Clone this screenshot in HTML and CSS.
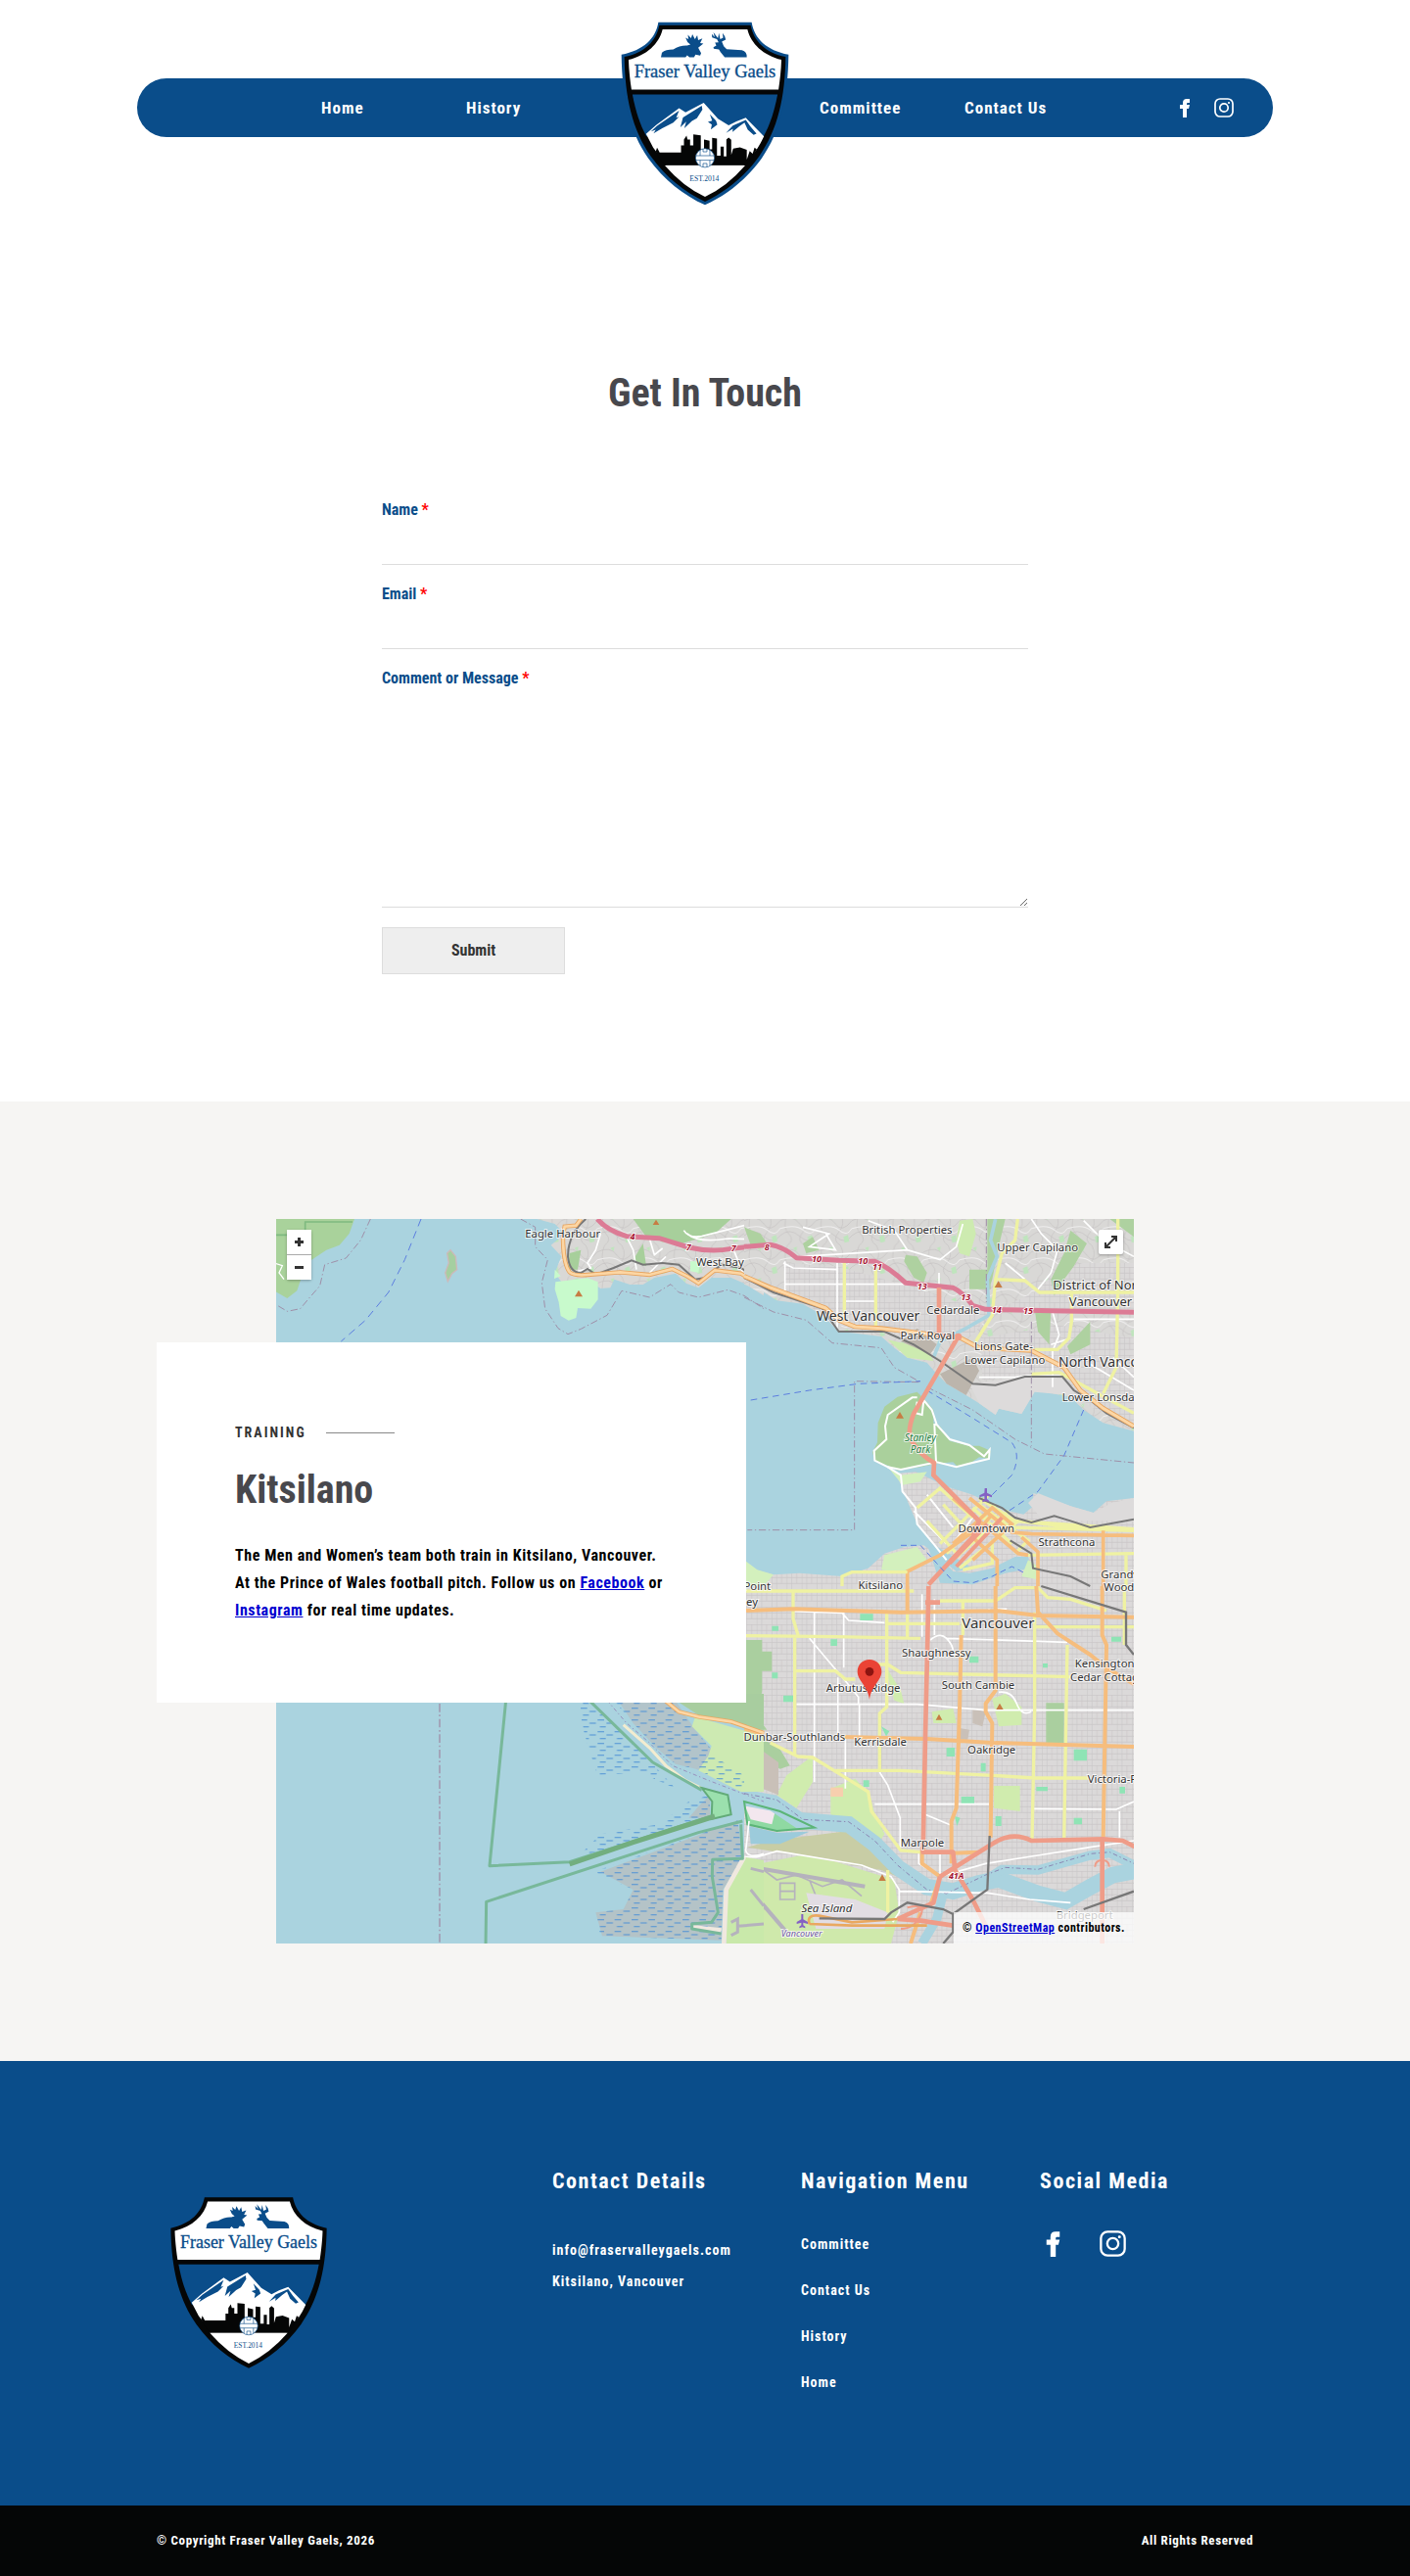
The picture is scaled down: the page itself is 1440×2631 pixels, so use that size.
FILE: index.html
```html
<!DOCTYPE html>
<html lang="en">
<head>
<meta charset="utf-8">
<meta name="viewport" content="width=device-width, initial-scale=1">
<title>Contact Us - Fraser Valley Gaels</title>
<link rel="stylesheet" href="styles.css">
</head>
<body>
<svg class="sprite" aria-hidden="true">
  <symbol id="crest" viewBox="100 68 520 564">
    <path fill="#050606" d="M219 77H501C510 125 545 162 609 175C607 300 585 400 527 482C480 548 422 592 360 622C298 592 240 548 193 482C135 400 113 300 111 175C175 162 210 125 219 77Z"/>
    <path fill="#fff" d="M229 90H491C502 135 540 170 596 184C595 217 591 249 587 276H133C129 249 125 217 124 184C180 170 218 135 229 90Z"/>
    <path fill="#0a4d8a" d="M136 291H584C574 345 560 385 541 420H179C160 385 146 345 136 291Z"/>
    <path fill="#fff" d="M178 413L210 385L280 333L300 346L356 317L400 366L433 386L457 374L486 363L542 420Q532 442 520 460L480 508H240L200 455Z"/>
    <g fill="#0a4d8a">
      <path d="M280 341L212 388L193 405L208 400L201 411L228 395L262 378L280 360L271 363ZM350 326L292 362L284 392L302 375L296 395L320 373L335 364L352 338ZM375 352L382 372L369 376L381 384L378 399L398 384L394 372ZM486 370L446 387L425 410L446 397L445 407L466 389L482 378L492 400L510 416L519 412L501 391Z"/>
      <path d="M224 176L227 162Q238 152 262 152Q282 139 305 140L315 137L306 129L300 116L309 120L307 107L317 117L321 105L329 120L336 108L339 123L352 118L345 132L355 134L339 147L348 163L345 171L331 168L326 176H312L305 170L300 176Z"/>
      <path d="M391 131L402 130L397 120L382 115L381 104L390 114L386 99L400 117L403 101L407 120L416 116L414 101L421 111L424 122L412 128L418 142L427 151L474 154Q490 158 489 176H421L408 160L403 152L387 150L386 145L395 140Z"/>
    </g>
    <path fill="#050606" d="M212 455L220 470H286V448H295V430L303 418L306 430H314V448H324V414L347 417V460L357 461V430L374 434V460H382V425L397 427V480H408V452H418V482H426V430L433 424L441 431V478L447 458L468 454L489 462V492L498 466L507 474L513 455L520 460Q500 492 484 509H236Q218 488 208 467Z"/>
    <path fill="#fff" d="M236 510H484Q428 575 360 607Q292 575 236 510Z"/>
    <circle cx="360" cy="487" r="29" fill="#fff" stroke="#0a4d8a" stroke-width="2"/>
    <path fill="none" stroke="#0a4d8a" stroke-width="2" d="M333 480H387M333 494H387M345 462V480M375 462V480M345 494V511M375 494V511M354 459V468H366V459M354 515V504H366V515"/>
    <text x="360" y="238" text-anchor="middle" font-family="'Liberation Serif', serif" font-weight="400" font-size="56" fill="#0a4d8a" stroke="#0a4d8a" stroke-width="1">Fraser Valley Gaels</text>
    <text x="358" y="558" text-anchor="middle" font-family="'Liberation Serif', serif" font-weight="400" font-size="23" fill="#0a4d8a">EST.2014</text>
  </symbol>
  <symbol id="facebook" viewBox="0 0 20 20">
    <path fill="#fff" d="M8 20V11H5V7H8V5Q8 1 12 1H15V5H13Q12 5 12 6V7H15L14 11H12V20Z"/>
  </symbol>
  <symbol id="instagram" viewBox="0 0 20 20">
    <rect x="1" y="1" width="18" height="18" rx="5" fill="none" stroke="#fff" stroke-width="1.7"/>
    <circle cx="10" cy="10" r="4.2" fill="none" stroke="#fff" stroke-width="1.7"/>
    <circle cx="15" cy="5" r="1.1" fill="#fff"/>
  </symbol>
</svg>

<header class="site-header">
  <nav class="bar" aria-label="Main">
    <ul class="links links-left">
      <li><a href="#home">Home</a></li>
      <li><a href="#history">History</a></li>
    </ul>
    <a class="brand" href="#home" aria-label="Fraser Valley Gaels">
      <svg class="brand-crest" viewBox="100 68 520 564">
        <path fill="#0a4d8a" d="M216 68H504C512 118 550 155 618 168C616 305 592 408 535 488C486 555 426 602 360 632C294 602 234 555 185 488C128 408 104 305 102 168C170 155 208 118 216 68Z"/>
        <use href="#crest" x="100" y="68" width="520" height="564"/>
      </svg>
    </a>
    <ul class="links links-right">
      <li><a href="#committee">Committee</a></li>
      <li><a href="#contact">Contact Us</a></li>
    </ul>
    <div class="social">
      <a href="#facebook-page" aria-label="Facebook"><svg><use href="#facebook"/></svg></a>
      <a href="#instagram-page" aria-label="Instagram"><svg><use href="#instagram"/></svg></a>
    </div>
  </nav>
</header>

<main>
  <section class="contact" id="contact">
    <h1 class="title">Get In Touch</h1>
    <form class="form">
      <div class="field">
        <label for="name">Name <span class="required">*</span></label>
        <input id="name" type="text" required>
      </div>
      <div class="field">
        <label for="email">Email <span class="required">*</span></label>
        <input id="email" type="email" required>
      </div>
      <div class="field">
        <label for="message">Comment or Message <span class="required">*</span></label>
        <textarea id="message" required></textarea>
      </div>
      <button class="submit" type="submit">Submit</button>
    </form>
  </section>

  <section class="training">
    <div class="training-grid">
      <div class="map">
        <svg class="map-art" viewBox="0 0 2628 2220" preserveAspectRatio="xMaxYMid slice" role="img" aria-label="Map of Vancouver">
          <defs>
            <pattern id="streets" width="46" height="54" patternUnits="userSpaceOnUse">
              <rect width="46" height="54" fill="#dbd9d9"/>
              <path fill="none" stroke="#c9c6c7" stroke-width="2" d="M0 1H46M0 19H46M0 37H46M1 0V54M16 0V54M31 0V37"/>
            </pattern>
            <pattern id="hills" width="110" height="96" patternUnits="userSpaceOnUse">
              <rect width="110" height="96" fill="#d9d8d6"/>
              <path fill="none" stroke="#c5c1c2" stroke-width="2" d="M0 20Q40 0 60 30T110 20M0 66Q30 40 60 68T110 66M22 0Q6 40 26 60T22 96M75 0Q92 30 70 55T75 96"/>
              <path fill="none" stroke="#efeeee" stroke-width="3" d="M0 44Q50 30 72 50T110 44"/>
              <path fill="#bfe5bd" d="M84 70L98 64L102 84L88 88ZM40 8L52 4L50 18Z"/>
            </pattern>
            <pattern id="marsh" width="52" height="36" patternUnits="userSpaceOnUse">
              <path stroke="#4e92d6" stroke-width="3" d="M3 8H23M30 18H50M10 29H28"/>
            </pattern>
          </defs>
          <rect width="2628" height="2220" fill="#aad3df"/>

          <!-- Bowen Island corner and the north shore -->
          <g transform="translate(-6 -15)">
            <path fill="#a9d29b" d="M0 15H246L230 60L200 95L160 110L100 150L80 205L70 235L40 258L0 235Z"/>
            <path fill="none" stroke="#7fba80" stroke-width="5" d="M0 64H95V24H240"/>
            <path fill="none" stroke="#fff" stroke-width="4" d="M0 150L25 158L15 180L30 200"/>
            <path fill="#a5cfa0" stroke="#cdb9b9" stroke-width="4" d="M540 110L556 130L560 170L545 182L532 206L524 180L535 150L530 120Z"/>
            <path fill="url(#hills)" d="M805 15L860 30L890 60L848 95L880 130L860 180L880 208L960 200L1000 228L1030 226L1042 200L1090 216L1130 216L1165 195L1230 182L1262 212L1300 226L1340 195L1400 195L1440 212L1500 250V15Z"/>
            <path fill="#a7cf9b" d="M1100 15H1400L1350 60L1250 90L1140 70ZM905 120L940 110L930 170L900 170ZM1130 90L1140 160L1100 140Z"/>
            <path fill="#c8facc" d="M862 208L960 196L992 208V262L970 290L930 288L925 318L902 326L878 312L872 270L860 230ZM860 170L878 190L858 198ZM1275 145H1305L1300 180L1275 175Z"/>
            <g fill="none" stroke="#fff" stroke-width="5">
              <path d="M1000 60L985 110L960 150L970 165L930 175M1080 70L1100 110L1110 170M1150 75L1165 125L1190 105M1200 130L1180 150L1150 180M1255 50Q1270 75 1310 68L1500 20M1265 60Q1300 90 1390 75L1500 78M1410 115L1440 190"/>
            </g>
            <path fill="none" stroke="#777" stroke-width="6" d="M955 15Q900 60 900 130Q905 180 940 180L960 168L985 185L1040 165L1095 142L1130 155L1190 150L1240 155L1290 200L1320 195L1370 155L1430 165L1500 210"/>
            <path fill="none" stroke="#e8a35c" stroke-width="13" d="M940 15L925 35L890 38L885 70Q885 150 905 178Q920 190 960 186L1060 178L1150 186L1220 168L1265 190L1300 212L1350 172L1430 182L1500 225"/>
            <path fill="none" stroke="#fcd6a4" stroke-width="8" d="M940 15L925 35L890 38L885 70Q885 150 905 178Q920 190 960 186L1060 178L1150 186L1220 168L1265 190L1300 212L1350 172L1430 182L1500 225"/>
            <path fill="none" stroke="#dc7b95" stroke-width="15" d="M990 15Q1020 50 1080 68L1180 74L1270 102Q1340 118 1400 106L1500 95"/>
            <path fill="none" stroke="#9f8fa8" stroke-width="3" stroke-dasharray="22 8 4 8" d="M295 15L265 80L220 135L155 155L140 220L105 260L80 290L40 298L10 280M755 15L800 40L800 100L838 140L820 210L830 290L870 350L900 368L940 352L1020 310L1065 235L1150 255L1215 215L1240 240L1300 255L1390 232L1440 250L1500 290"/>
            <path fill="none" stroke="#5c7ee0" stroke-width="3" stroke-dasharray="24 16" d="M450 15L400 140L350 240L280 325L205 390"/>
          </g>

          <g transform="translate(1434 -15)">
            <path fill="url(#hills)" d="M0 15H1194V665L1100 640L1040 600L1000 560L890 540L850 612L780 596L770 615L720 580L680 555L620 520L590 490L560 455L500 440L460 410L420 375L340 365L290 360L240 310L180 275L100 265L60 240L0 215Z"/>
            <path fill="url(#streets)" d="M120 150L285 160L500 220L720 290L950 290H1194V150H1040L960 170L890 240L760 300L700 370L600 390L460 370L290 340L130 240ZM725 380L960 340L1194 380V640L1060 590L960 500L880 490L730 510Z"/>
            <path fill="#dddbdb" d="M690 520L880 495L980 505L1040 590L1000 555L890 545L850 612L780 596L770 615L720 580Z"/>
            <path fill="#aed1a0" d="M745 15H800L775 120L760 200L740 260L745 180ZM690 170H755V230H690ZM495 125L530 130L560 180L550 210L520 195L490 145ZM1000 50L1050 90L1010 160L980 200L950 250L940 200L980 120ZM0 40L50 60L70 90L20 95ZM1060 330L1060 400L1000 430L990 405ZM890 290H940L935 400L900 360ZM1120 15H1194V70ZM180 90L210 70L230 110L190 120Z"/>
            <path fill="#cdebb0" d="M660 20L700 15L710 60L690 130L660 120L650 80ZM485 395L560 410L580 450L500 440L440 385Z"/>
            <path fill="#bcb5ac" d="M600 490L700 440L720 480L680 555L620 520ZM530 350L590 400L570 430L480 390Z"/>
            <path fill="none" stroke="#aad3df" stroke-width="11" d="M770 15L755 80L775 130L745 200L750 310L680 350L600 390L580 440"/>
            <g fill="none" stroke="#fff" stroke-width="5">
              <path d="M125 145V240M125 215H500M285 150V350M310 267H400M170 130L500 110L600 140L650 100L670 30M180 40L260 60L200 100L280 110L250 60M500 110L460 50L380 20M120 150L150 165L285 170M597 180V225M880 15L910 60L960 110L940 180L900 230M800 150L860 200M1040 20L1100 80L1194 130M720 500H830L870 495H1000M945 300L965 370L945 420V530M1010 322H1194M1000 380L940 400M1060 460L1194 540M1130 440L1194 500"/>
            </g>
            <g fill="none" stroke="#eff2a2" stroke-width="10">
              <path d="M307 145V335M403 165V345M838 15L830 80L790 120L770 200L760 310L710 390M770 200L860 204L905 240H1194M1003 240V330L995 380L960 415H890M880 490L965 485L1194 610M1145 15V240L1140 470L1100 550"/>
            </g>
            <path fill="none" stroke="#777" stroke-width="6" d="M0 195L90 240L150 260L240 290L290 360H430L520 400L600 450L700 520L770 524L860 498H975L1010 540L1060 570L1110 610L1194 655"/>
            <g fill="none" stroke-linejoin="round">
              <path stroke="#e8a35c" stroke-width="14" d="M0 190L80 225L250 288L290 325L340 345L420 350L600 372L660 378L720 410L880 418L980 470L1030 540L1100 595L1194 650"/>
              <path stroke="#fcd6a4" stroke-width="9" d="M0 190L80 225L250 288L290 325L340 345L420 350L600 372L660 378L720 410L880 418L980 470L1030 540L1100 595L1194 650"/>
              <path stroke="#dc7b95" stroke-width="15" d="M0 100L80 94Q120 100 160 134L290 142L400 145Q440 160 495 211L640 226Q670 240 700 280L740 292L940 296L1194 301"/>
              <path stroke="#ef9c88" stroke-width="14" d="M597 225V372L655 376"/>
            </g>
            <g fill="none" stroke="#9f8fa8" stroke-width="3" stroke-dasharray="22 8 4 8">
              <path d="M0 255L90 300L190 325L270 395L420 410L460 470L540 515L338 512V968H10M560 530L700 600L830 690L920 735L1194 762M880 330V710M742 15V270"/>
            </g>
            <path fill="none" stroke="#5c7ee0" stroke-width="3" stroke-dasharray="20 14" d="M20 570L200 540L350 520L540 512M560 540L700 625L820 700Q850 740 820 800L760 860M1040 600L980 740L900 850L810 910"/>

            <!-- Stanley Park -->
            <path fill="#aad09c" d="M530 545L470 560L430 590L410 640L408 700L393 730L400 755L440 770L470 785L540 775L585 765L640 760L655 775L690 765L720 745L750 750L755 725L720 710L690 710L630 695L600 650L580 640V600L555 570Z"/>
            <path fill="none" stroke="#fff" stroke-width="6" d="M530 562L515 562L440 615L432 650L436 690L398 725L400 755L440 775L480 783L540 770L590 760L650 775L690 764L750 750L752 722L735 742L690 708L630 690L590 645L583 645L588 760M590 645L575 600L550 570L545 615L525 610L530 575"/>
          </g>

          <!-- city south of Burrard Inlet -->
          <path fill="url(#streets)" d="M1434 1048L1474 1076L1524 1090L1604 1085L1734 1095L1814 1070L1864 1025L1924 1005L1985 1000L2040 1045L2084 1080L2134 1070L2010 995L1962 930L1924 840L1900 780L1960 775L2054 820L2134 845L2224 890L2290 905L2320 880V840L2434 880L2504 900L2544 865L2628 855V2220H1434Z"/>
          <path fill="#dddbdb" d="M2304 870L2334 840L2434 880L2504 900L2560 870L2628 855V925H2350Z"/>

          <g transform="translate(1434 -15)">
            <path fill="#aad3df" d="M560 1010L600 1050L640 1095L690 1100L760 1085L830 1050L870 1050L880 1085L800 1100L700 1135L600 1130Z"/>
            <path fill="#d3f0bd" d="M440 775L480 800L560 790L540 820L485 830ZM430 1045L530 1020L560 1060L500 1100L420 1090ZM0 1060L40 1090L90 1105L60 1140H0ZM870 1060L900 1080V1120L850 1110Z"/>
            <path fill="none" stroke="#fff" stroke-width="6" d="M440 775L480 800L485 850L525 900L530 950L580 1010L620 1060M560 860L640 960M610 830L700 930L640 1010M520 910L620 1010"/>
            <g fill="none" stroke="#eff2a2" stroke-width="10">
              <path d="M530 900L600 840L700 930M600 1010L750 860M620 1040L770 890M640 1060L810 910M660 1085L840 940M560 940L660 1050M610 890L720 1010M700 900L820 1010M720 890L870 1000L830 1040M740 930L1060 965M820 960L1194 970M870 1045L1194 1040M720 870L830 940L1194 965M670 1090L760 1070L760 1000M1170 1040V1140"/>
            </g>
            <g fill="none" stroke="#f6bd7d" stroke-width="11">
              <path d="M690 870L820 975L880 980L1194 985M500 1140V1095L600 1045L720 960M640 870L720 940L840 1040L870 1045M775 1140V1060L700 990L760 920M900 1140V1035L850 990M1100 970V1140M640 1010L760 900L820 950L700 1060"/>
            </g>
            <path fill="none" stroke="#eff2a2" stroke-width="10" d="M300 1140V1110L330 1097H500"/>
            <path fill="none" stroke="#ef9c88" stroke-width="14" stroke-linejoin="round" d="M655 376L590 490L520 610Q500 660 510 690Q540 740 582 762L580 800L720 940L700 990L565 1135"/>
            <path fill="none" stroke="#ef9c88" stroke-width="12" d="M630 1070L745 950M650 1080L790 930"/>
            <circle cx="656" cy="376" r="11" fill="#ef9c88"/>
            <path fill="none" stroke="#777" stroke-width="6" d="M720 870L790 900L830 930L880 945L950 925L1000 940L1060 960L1194 935M815 1000L880 1040L885 1085L1000 1110L1060 1140"/>
            <path fill="none" stroke="#5c7ee0" stroke-width="3" stroke-dasharray="18 12" d="M480 1015L540 1015L590 1070L640 1125L700 1130L760 1110L820 1080L860 1100"/>
            <path fill="#8461c4" d="M737 840h7v14l15 8v6l-15-5v10l6 5v5l-10-3-10 3v-5l6-5v-10l-15 5v-6l15-8z"/>
          </g>

          <g transform="translate(1434 1125)">
            <!-- parks, golf courses and the river -->
            <path fill="#aacf9f" d="M0 165H55V200H85V260H55V320L40 400L70 440H0ZM0 440L60 470L110 500L140 550L110 560L60 530H0ZM925 358H980V482H925Z"/>
            <path fill="#d0ecae" d="M130 580L210 520V600L160 680L100 640ZM265 620L340 590L385 640L400 700L430 760L410 790L350 740L265 700ZM765 612H845V690L765 680ZM575 385L640 375L650 420H580ZM760 345L800 330L850 370V425L780 430ZM430 240L480 320L490 360L460 350Z"/>
            <path fill="#8fe4b5" d="M355 85H395V105H355ZM265 163H285V183H265ZM690 215H718V235H690ZM85 265H103V283H85ZM120 335H150V355H120ZM620 495H645V522H620ZM725 542H740V568H725ZM770 705H788V735H770ZM665 645H705V668H665ZM1010 500H1050V535H1010ZM1010 710H1035V730H1010ZM365 595H383V615H365ZM420 430L445 445L435 460ZM1125 155H1155V170H1125ZM915 237H930V250H915ZM895 615H930V628H895ZM645 705L662 710L652 735ZM85 122H105V137H85ZM1150 615H1167V635H1150Z"/>
            <path fill="#c9c0b8" d="M700 375L740 385L730 430L700 420ZM660 435L690 440L685 470H660ZM0 520L50 500L105 540V640L30 610Z"/>
            <path fill="#f7cfae" d="M265 617H303V645H265Z"/>
            <path fill="#cfe9ab" d="M0 860L200 820L460 900L475 1000L450 1095H0Z"/>
            <path fill="#c8cda5" d="M10 800L80 780L320 750L400 790L470 890L420 870L200 830Z"/>
            <path fill="#8fd9a2" d="M0 655L110 690L210 735V745L100 750L10 730Z"/>
            <path fill="#f3e7ee" d="M0 668L95 690L85 730L20 715Z"/>
            <path fill="#9ccbdb" d="M15 735L100 755L200 752L110 790L20 790Z"/>
            <path fill="none" stroke="#aad3df" stroke-width="50" d="M-60 620L0 648L90 665L170 718L320 730L400 790L470 862L560 922L640 935L720 910L780 898L900 942L985 965L1060 922L1130 885L1200 872"/>
            <path fill="none" stroke="#aad3df" stroke-width="28" d="M730 905L790 868L900 870L1060 825L1120 818L1200 858M610 940L590 1020L545 1095"/>
            <path fill="none" stroke="#8a86b3" stroke-width="3" stroke-dasharray="14 8 4 8" d="M0 635L100 655L180 715L320 722L400 780L470 855L560 930L620 942L740 885L800 862L900 868L1060 820L1120 815L1194 850"/>
            <path fill="none" stroke="#5bb577" stroke-width="6" d="M0 660L110 690L215 740L100 750L10 730Z"/>
            <path fill="none" stroke="#b5b2bd" stroke-width="12" d="M20 860L370 920M20 932L130 1060"/>
            <path fill="none" stroke="#b5b2bd" stroke-width="5" d="M60 870L100 900L160 885L240 920L300 900L360 950M200 900L240 1000M60 990L0 1050M110 910H155V960H110ZM110 935H155"/>
            <path fill="#e2dde3" d="M190 940L340 960L440 1000L430 1050H220Z"/>

            <g fill="none" stroke="#fff" stroke-width="5">
              <path d="M150 77L300 82L320 105L430 112M215 80V600M305 80V250M160 362H530L740 380H1194M287 280V460M353 362V460M200 160L250 220L310 290L350 340V360M570 165Q600 140 620 160Q640 180 640 200M620 160L990 172M545 25V155M583 40V150M310 460V620M415 570L440 610L478 710V800M400 668H750M885 682L1140 684L1194 660M1150 690V770M555 700L640 735M535 820V850L600 890L740 850L880 828L1060 800L1194 780M600 820L600 890M475 935L745 940L875 960L1000 970M0 830L40 830L100 812L360 855L450 890L475 930V1000L455 1030M780 325Q820 320 835 360T880 385M480 810L540 815M775 70H805M750 70V80"/>
            </g>
            <g fill="none" stroke="#eff2a2" stroke-width="10">
              <path d="M150 15V100L165 150M0 152L280 155L540 160M155 155V520M0 15H520M437 80V370L415 390V560M160 260H280L310 285H340M400 240H440L480 265L1000 278M670 40V150M435 115H660M500 85V160M600 45H770L830 5H900L930 35L1000 40L1110 75M895 125H1194M990 180L980 780M890 80V380L882 780M280 565L480 565L760 580L890 588H1060M80 480L165 522L210 525L300 580L380 630L390 690L480 810L540 815M1165 0V180M440 870V1000"/>
            </g>
            <g fill="none" stroke="#f6bd7d" stroke-width="12" stroke-linejoin="round">
              <path d="M0 75L150 70L480 80L780 76L900 90L1194 95M500 0V80M770 0V320L740 360V385L760 420L755 770M895 0L900 80L960 145L1060 210L1110 250L1194 300M1097 0V150L1110 180L1100 770M665 150L660 380L650 680L635 720V850M0 440L60 455M300 462L560 468L760 480L1194 492M635 818L720 815M545 800V850L600 890L570 980M540 1000L510 1095"/>
            </g>
            <g fill="none" stroke="#ef9c88" stroke-width="14" stroke-linejoin="round">
              <path d="M565 0L562 160L555 460L548 815H640L645 860M555 50H600M1097 770V1095M600 890L580 970L470 1020M600 890L760 790Q820 750 880 780L1100 775L1160 780L1200 800M640 860L700 960L740 1040M470 1020L540 1025L640 1040"/>
            </g>
            <path fill="none" stroke="#ef9c88" stroke-width="6" d="M500 985Q560 970 540 1010T480 1050M1075 860Q1075 840 1097 840T1118 860"/>
            <path fill="none" stroke="#e9a860" stroke-width="8" d="M200 1035Q190 1005 230 1010L330 1030L470 1020M200 1035L330 1040H560"/>
            <path fill="none" stroke="#777" stroke-width="7" d="M752 765L745 930L640 1005L610 990L500 970L450 1000L430 1020L230 1018M640 1005V1060L610 1095M910 0L1170 80V180L1194 210M1194 935L1040 990"/>
            <g fill="#c77c43">
              <path d="M597 392l10 18h-20zM783 359l11 19h-22zM423 883l11 20h-22z"/>
            </g>
            <path fill="#8461c4" d="M175 1005h6v16l14 8v6l-14-4v8l6 4v5l-9-3-9 3v-5l6-4v-8l-14 4v-6l14-8z"/>
          </g>

          <!-- tidal flats and Iona jetty -->
          <g transform="translate(-6 1455)">
            <path fill="#b2c4ca" d="M1040 0H1215L1290 110L1340 170L1310 235L1230 215L1170 165L1100 90Z"/>
            <path fill="#b4c3c7" d="M1420 388L1000 545L1100 600L1070 660L985 670L1005 742L1370 755L1375 600L1435 505ZM1335 310V380L1270 380L1300 345Z"/>
            <path fill="url(#marsh)" d="M1040 20H1215L1290 110L1340 170L1310 235L1230 215L1170 165L1100 90ZM930 20L975 30L1160 215L1230 290L1120 240L990 250L950 120ZM1420 388L980 545L1100 600L1070 660L985 670L1000 742L1370 755L1375 600L1435 505ZM1335 310V380L930 500L1000 430L1180 400L1270 330Z"/>
            <path fill="#a8cd9f" d="M1200 0H1500V110L1420 95L1300 65Z"/>
            <path fill="#cdeab2" d="M1290 70L1500 130V300L1430 300L1300 235L1330 190L1340 160L1280 100Z"/>
            <path fill="url(#marsh)" d="M1330 180L1440 250V300L1300 235Z"/>
            <path fill="#c9e9aa" d="M1440 500L1500 510V765H1385L1390 600Z"/>
            <path fill="none" stroke="#f0e8df" stroke-width="14" d="M1440 500L1385 600L1378 765M1280 715L1370 725"/>
            <path fill="none" stroke="#b5b2bd" stroke-width="9" d="M1460 535L1500 545M1460 600L1500 650M1400 700L1420 690V730L1400 740M1420 712L1500 705"/>
            <path fill="none" stroke="#e9a860" stroke-width="13" d="M1195 18L1240 55L1300 70L1400 85L1500 120"/>
            <path fill="none" stroke="#fcd6a4" stroke-width="8" d="M1195 18L1240 55L1300 70L1400 85L1500 120"/>
            <path fill="none" stroke="#f2ecd0" stroke-width="9" d="M1070 95L1150 165L1200 220L1260 265L1310 290"/>
            <path fill="#9be0ad" stroke="#62ab78" stroke-width="6" d="M1310 288L1390 310L1400 370L1340 384L1342 330Z"/>
            <g fill="none" stroke="#78b89a" stroke-width="9" stroke-linejoin="round">
              <path d="M710 20L660 527L905 515L1340 375M1435 390L1300 425L650 637L648 770M965 20L1160 210L1310 295M1430 400L1435 505L1343 508L1342 560L1360 670L1340 700L1280 705V720L1370 735"/>
            </g>
            <path fill="none" stroke="#72ae7f" stroke-width="15" d="M905 522L1100 455L1350 375"/>
            <path fill="none" stroke="#fff" stroke-width="5" d="M1455 390L1445 480Q1450 505 1500 490"/>
            <path fill="none" stroke="#9792bd" stroke-width="3" stroke-dasharray="12 8 4 8" d="M1020 20L1080 90L1150 150L1220 220L1330 265L1500 330"/>
            <path fill="none" stroke="#9f8fa8" stroke-width="4" stroke-dasharray="26 8 5 8" d="M507 30V765"/>
          </g>

          <!-- place names -->
          <g class="places" transform="translate(-6 -15)">
            <text x="884" y="72">Eagle Harbour</text>
            <text x="1366" y="160">West Bay</text>
          </g>
          <g class="places" transform="translate(1434 -15)">
            <text x="499" y="60">British Properties</text>
            <text x="899" y="113">Upper Capilano</text>
            <text x="640" y="307">Cedardale</text>
            <text x="562" y="384">Park Royal</text>
            <text x="795" y="417">Lions Gate-</text>
            <text x="799" y="460">Lower Capilano</text>
            <text x="742" y="976">Downtown</text>
            <text x="988" y="1016">Strathcona</text>
            <text x="418" y="1148">Kitsilano</text>
            <text x="40" y="1153">Point</text>
            <text class="start" x="974" y="572">Lower Lonsdale</text>
            <text class="start" x="1093" y="1116">Grandview-</text>
            <text class="start" x="1102" y="1156">Woodland</text>
            <text class="town" x="380" y="326">West Vancouver</text>
            <text class="area start" x="946" y="232">District of North</text>
            <text class="area" x="1092" y="282">Vancouver</text>
            <text class="town start" x="963" y="467">North Vancouver</text>
            <text class="park" x="540" y="696">Stanley</text>
            <text class="park" x="540" y="731">Park</text>
          </g>
          <g class="places" transform="translate(1434 1125)">
            <text class="start" x="6" y="60">ey</text>
            <text class="city" x="778" y="130">Vancouver</text>
            <text x="589" y="215">Shaughnessy</text>
            <text x="365" y="323">Arbutus Ridge</text>
            <text x="717" y="316">South Cambie</text>
            <text x="1110" y="249">Kensington-</text>
            <text class="start" x="999" y="292">Cedar Cottage</text>
            <text x="154" y="475">Dunbar-Southlands</text>
            <text x="417" y="488">Kerrisdale</text>
            <text x="758" y="514">Oakridge</text>
            <text class="start" x="1052" y="602">Victoria-Fraserview</text>
            <text x="546" y="797">Marpole</text>
            <text x="1043" y="1020">Bridgeport</text>
            <text class="island" x="253" y="1000">Sea Island</text>
            <text class="airport" x="176" y="1075">Vancouver</text>
          </g>
          <g class="exits">
            <text x="1092" y="62">4</text>
            <text x="1264" y="96">7</text>
            <text x="1402" y="98">7</text>
            <text x="1504" y="95">8</text>
            <text x="1656" y="133">10</text>
            <text x="1798" y="139">10</text>
            <text x="1842" y="156">11</text>
            <text x="1979" y="215">13</text>
            <text x="2113" y="249">13</text>
            <text x="2207" y="289">14</text>
            <text x="2304" y="290">15</text>
            <text x="2084" y="2021">41A</text>
          </g>
          <g fill="#c77c43">
            <path d="M927 218l12 20h-24zM1164 2l10 16h-20zM1911 591l12 20h-24zM2213 190l12 20h-24z"/>
          </g>

          <g transform="translate(1434 1125)">
            <path fill="#ea4335" d="M384 225C363 225 347 241 347 262C347 290 379 306 384 348C389 306 421 290 421 262C421 241 405 225 384 225Z"/>
            <circle cx="384" cy="262" r="13" fill="#8c1410"/>
          </g>
        </svg>
        <div class="zoom">
          <button type="button" aria-label="Zoom in"><svg viewBox="0 0 25 25"><path d="M8 12.500H17M12.500 8V17"/></svg></button>
          <button type="button" aria-label="Zoom out"><svg viewBox="0 0 25 25"><path d="M8 12.500H17"/></svg></button>
        </div>
        <button class="fullscreen" type="button" aria-label="Full screen">
          <svg viewBox="0 0 25 25"><path d="M8 17L17 8M13 7H18V12M7 13V18H12"/></svg>
        </button>
        <p class="credit">© <a href="#openstreetmap">OpenStreetMap</a> contributors.</p>
      </div>

      <article class="card">
        <p class="eyebrow">Training</p>
        <h2 class="title">Kitsilano</h2>
        <p class="copy">The Men and Women’s team both train in Kitsilano, Vancouver. At the Prince of Wales football pitch. Follow us on <a href="#facebook-page">Facebook</a> or <a href="#instagram-page">Instagram</a> for real time updates.</p>
      </article>
    </div>
  </section>
</main>

<footer class="site-footer">
  <div class="footer-grid">
    <svg class="footer-crest" viewBox="110 76 500 547" role="img" aria-label="Fraser Valley Gaels"><use href="#crest" x="100" y="68" width="520" height="564"/></svg>
    <section>
      <h2>Contact Details</h2>
      <address>info@fraservalleygaels.com<br>Kitsilano, Vancouver</address>
    </section>
    <section>
      <h2>Navigation Menu</h2>
      <ul class="menu">
        <li><a href="#committee">Committee</a></li>
        <li><a href="#contact">Contact Us</a></li>
        <li><a href="#history">History</a></li>
        <li><a href="#home">Home</a></li>
      </ul>
    </section>
    <section>
      <h2>Social Media</h2>
      <div class="footer-social">
        <a href="#facebook-page" aria-label="Facebook"><svg><use href="#facebook"/></svg></a>
        <a href="#instagram-page" aria-label="Instagram"><svg><use href="#instagram"/></svg></a>
      </div>
    </section>
  </div>
  <div class="legal">
    <div class="legal-row">
      <span>© Copyright Fraser Valley Gaels, 2026</span>
      <span>All Rights Reserved</span>
    </div>
  </div>
</footer>
</body>
</html>
```
FILE: styles.css
```css
:root {
  --blue: #0a4d8a;
  --heading: #48484d;
}

* {
  box-sizing: border-box;
}

body {
  margin: 0;
  background: #fff;
  color: #000;
  font-family: "Roboto Condensed", "Liberation Sans Narrow", Roboto, sans-serif;
  font-size: 16px;
  font-weight: 700;
}

h1, h2, p, ul {
  margin: 0;
  padding: 0;
}

ul {
  list-style: none;
}

.sprite {
  position: absolute;
  width: 0;
  height: 0;
}

/* Header */
.site-header {
  padding: 80px 20px 0;
}

.bar {
  display: grid;
  grid-template-columns: 1fr 172px 1fr;
  grid-template-rows: 60px;
  align-items: center;
  position: relative;
  max-width: 1160px;
  margin: 0 auto;
  border-radius: 30px;
  background: var(--blue);
}

.links {
  display: grid;
  grid-template-columns: 148px 148px;
}

.links-left {
  justify-content: end;
  padding-right: 10px;
}

.links-right {
  padding-left: 31px;
}

.links a {
  color: #fff;
  font-size: 17px;
  letter-spacing: 1px;
  line-height: 20px;
  text-decoration: none;
}

.brand {
  padding-top: 12px;
}

.brand-crest {
  display: block;
  width: 172px;
  height: 188px;
}

.social {
  display: flex;
  gap: 20px;
  position: absolute;
  right: 40px;
}

.social svg {
  display: block;
  width: 20px;
  height: 20px;
}

/* Contact form */
.contact {
  max-width: 700px;
  margin: 0 auto;
  padding: 238px 20px 130px;
}

.title {
  color: var(--heading);
  font-size: 40px;
  line-height: 48px;
}

.contact .title {
  margin-bottom: 85px;
  text-align: center;
}

.field {
  margin-bottom: 20px;
}

.field label {
  display: block;
  color: var(--blue);
  line-height: 20px;
}

.required {
  color: #f00;
}

.field input,
.field textarea {
  display: block;
  width: 100%;
  height: 46px;
  border: 0;
  border-bottom: 1px solid #ddd;
  background: transparent;
  font: inherit;
}

.field textarea {
  height: 224px;
  resize: vertical;
}

.submit {
  width: 187px;
  height: 48px;
  padding-bottom: 3px;
  border: 1px solid #ddd;
  background: #eee;
  color: #333;
  font: inherit;
}

/* Training location */
.training {
  padding: 120px 20px;
  background: #f6f5f3;
}

.training-grid {
  display: grid;
  grid-template-columns: 122px 480px 1fr 122px;
  align-items: start;
  max-width: 1120px;
  margin: 0 auto;
}

.map {
  grid-area: 1 / 2 / 2 / 4;
  position: relative;
  overflow: hidden;
}

.map-art {
  display: block;
  width: 100%;
  height: 740px;
}

.places text {
  fill: #333;
  stroke: rgba(255, 255, 255, 0.75);
  stroke-width: 6px;
  paint-order: stroke;
  font-family: "Noto Sans", sans-serif;
  font-size: 34px;
  font-weight: 400;
  text-anchor: middle;
}

.places .start {
  text-anchor: start;
}

.places .area {
  font-size: 39px;
}

.places .town {
  font-size: 42px;
}

.places .city {
  font-size: 45px;
}

.places .park,
.places .island,
.places .airport {
  font-style: italic;
}

.places .park {
  fill: #22803f;
  font-size: 30px;
}

.places .airport {
  fill: #6f57a5;
  font-size: 27px;
}

.exits text {
  fill: #a4122f;
  stroke: #fff;
  stroke-width: 5px;
  paint-order: stroke;
  font-family: "Noto Sans", sans-serif;
  font-size: 27px;
  font-style: italic;
  text-anchor: middle;
}

.zoom,
.fullscreen {
  position: absolute;
  top: 11px;
  border-radius: 2px;
  background: #fff;
  box-shadow: 0 1px 3px rgba(0, 0, 0, 0.3);
}

.zoom {
  left: 11px;
  display: grid;
  gap: 1px;
  background: #aaa;
}

.zoom button,
.fullscreen {
  width: 25px;
  height: 25px;
  padding: 0;
  border: 0;
}

.zoom button {
  background: #fff;
}

.zoom svg,
.fullscreen svg {
  display: block;
  width: 25px;
  height: 25px;
  fill: none;
  stroke: #333;
  stroke-width: 3px;
}

.fullscreen {
  right: 11px;
}

.fullscreen svg {
  stroke-width: 2px;
}

.credit {
  position: absolute;
  right: 0;
  bottom: 0;
  padding: 6px 9px;
  background: rgba(255, 255, 255, 0.75);
  font-size: 12px;
  letter-spacing: 0.04em;
  line-height: 20px;
}

.card {
  grid-area: 1 / 1 / 2 / 3;
  z-index: 1;
  margin-top: 126px;
  padding: 82px 80px 80px;
  background: #fff;
}

.eyebrow {
  display: flex;
  align-items: center;
  gap: 20px;
  margin-bottom: 25px;
  color: #333;
  font-size: 14px;
  letter-spacing: 2px;
  line-height: 20px;
  text-transform: uppercase;
}

.eyebrow::after {
  content: "";
  width: 70px;
  height: 1px;
  background: #888;
}

.card .title {
  margin-bottom: 29px;
}

.copy {
  letter-spacing: 0.035em;
  line-height: 28px;
}

.copy a,
.credit a {
  color: #0000d0;
}

/* Footer */
.site-footer {
  background: var(--blue);
  color: #fff;
}

.footer-grid {
  display: grid;
  grid-template-columns: 404px 254px 244px 1fr;
  max-width: 1160px;
  margin: 0 auto;
  padding: 107px 20px 89px;
}

.footer-crest {
  width: 160px;
  height: 175px;
  margin: 32px 0 0 14px;
}

.site-footer h2 {
  margin-bottom: 38px;
  font-size: 22px;
  letter-spacing: 0.07em;
  line-height: 32px;
}

.site-footer address {
  font-size: 14px;
  font-style: normal;
  letter-spacing: 1px;
  line-height: 32px;
}

.menu {
  font-size: 14px;
  letter-spacing: 1px;
}

.menu li {
  height: 47px;
  line-height: 20px;
}

.menu a {
  color: #fff;
  text-decoration: none;
}

.footer-social {
  display: flex;
  gap: 34px;
  margin-top: -4px;
}

.footer-social svg {
  display: block;
  width: 27px;
  height: 27px;
}

.legal {
  padding: 26px 20px;
  background: #050606;
}

.legal-row {
  display: flex;
  justify-content: space-between;
  max-width: 1120px;
  margin: 0 auto;
  font-size: 13px;
  letter-spacing: 0.05em;
  line-height: 20px;
}
```
